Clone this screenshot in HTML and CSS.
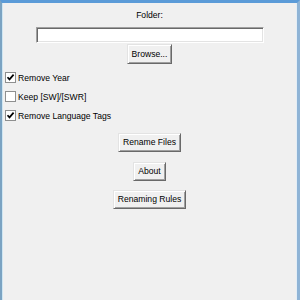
FILE: index.html
```html
<!DOCTYPE html>
<html lang="en">
<head>
    <meta charset="UTF-8">
    <meta name="viewport" content="width=device-width, initial-scale=1.0">
    <title>Renamer</title>
    <link rel="stylesheet" href="styles.css">
</head>
<body>
    <div class="window">
        <div class="folder-label">Folder:</div>
        <div class="entry"></div>
        <button class="btn btn-browse">Browse...</button>
        <div class="options">
            <label class="check-row">
                <span class="check-box">
                    <svg width="9" height="9" viewBox="0 0 9 9"><path d="M1.5 4.2 L3.5 6.4 L7.6 1.6" fill="none" stroke="#000" stroke-width="1.7"/></svg>
                </span>
                <span>Remove Year</span>
            </label>
            <label class="check-row">
                <span class="check-box"></span>
                <span>Keep [SW]/[SWR]</span>
            </label>
            <label class="check-row">
                <span class="check-box">
                    <svg width="9" height="9" viewBox="0 0 9 9"><path d="M1.5 4.2 L3.5 6.4 L7.6 1.6" fill="none" stroke="#000" stroke-width="1.7"/></svg>
                </span>
                <span>Remove Language Tags</span>
            </label>
        </div>
        <button class="btn btn-rename">Rename Files</button>
        <button class="btn btn-about">About</button>
        <button class="btn btn-rules">Renaming Rules</button>
    </div>
</body>
</html>
```
FILE: styles.css
```css
*{
    margin: 0;
    padding: 0;
    box-sizing: border-box;
}
html, body{
    width: 300px;
    height: 300px;
    overflow: hidden;
}
body{
    font-family: "Liberation Sans", Arial, sans-serif;
    font-size: 8.6px;
    color: #000;
    background: #f0f0f0;
}
.window{
    height: 300px;
    display: flex;
    flex-direction: column;
    align-items: center;
    background: #f0f0f0;
    border-top: 3px solid #5b9bd8;
    border-left: 2px solid #7ba3c2;
    border-right: 3px solid #8fb4d6;
    box-shadow: inset 1px 0 0 #cfe6f2, inset -1px 0 0 #e4eef6;
}
.folder-label{
    padding-top: 6px;
    line-height: 13px;
}
.entry{
    margin-top: 5px;
    width: 228px;
    height: 16px;
    background: #fff;
    border: 1px solid;
    border-color: #a0a0a0 #ffffff #ffffff #a0a0a0;
    box-shadow: inset 1px 1px 0 #696969, inset -1px -1px 0 #e3e3e3;
}
.btn{
    font: inherit;
    color: #000;
    background: #f0f0f0;
    height: 19px;
    padding: 0 4px;
    line-height: 15px;
    border: 1px solid;
    border-color: #e3e3e3 #696969 #696969 #e3e3e3;
    box-shadow: inset 1px 1px 0 #ffffff, inset -1px -1px 0 #a0a0a0;
}
.btn-browse{
    margin-top: 1px;
    height: 20px;
}
.options{
    align-self: stretch;
    margin-top: 4px;
    padding-left: 3px;
}
.check-row{
    display: flex;
    align-items: center;
    height: 19px;
    gap: 2px;
}
.check-box{
    width: 11px;
    height: 11px;
    background: #fff;
    border: 1px solid #8e8f8f;
    display: flex;
    align-items: center;
    justify-content: center;
}
.btn-rename{
    margin-top: 8px;
}
.btn-about{
    margin-top: 10px;
}
.btn-rules{
    margin-top: 9px;
}
```
